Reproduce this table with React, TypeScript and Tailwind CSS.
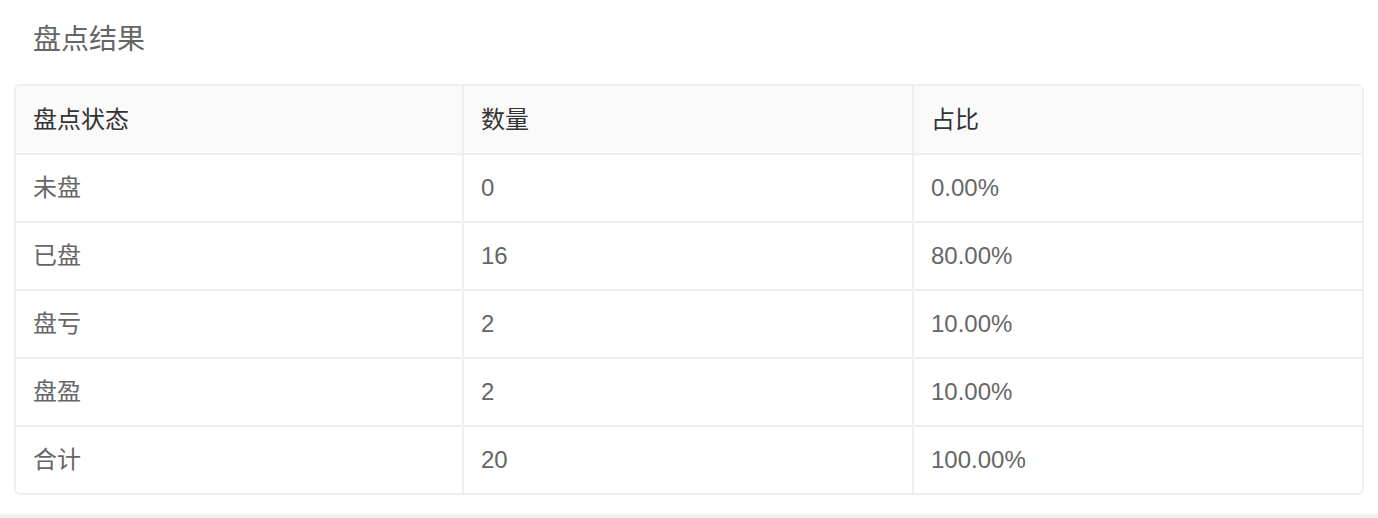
const rows = [
  { status: '未盘', count: '0', ratio: '0.00%' },
  { status: '已盘', count: '16', ratio: '80.00%' },
  { status: '盘亏', count: '2', ratio: '10.00%' },
  { status: '盘盈', count: '2', ratio: '10.00%' },
  { status: '合计', count: '20', ratio: '100.00%' },
];

const font = "font-['Liberation_Sans','Noto_Sans_CJK_SC',sans-serif]";

export default function App() {
  return (
    <div className={`min-h-[518px] bg-white ${font}`}>
      <div className="h-[84px] pl-[33px] pt-[25px] text-[28px] leading-[30px] text-[#666]">盘点结果</div>

      <div className="mx-[14px] overflow-hidden rounded-[6px] border-2 border-[#efefef]">
        <div className="grid h-[67px] grid-cols-[448px_450px_1fr] bg-[#fafafa] text-[24px] text-[#333]">
          {['盘点状态', '数量', '占比'].map((h, i) => (
            <div
              key={h}
              className={`flex items-center pl-[17px] ${i < 2 ? 'border-r-2 border-[#efefef]' : ''}`}
            >
              {h}
            </div>
          ))}
        </div>
        {rows.map((r) => (
          <div
            key={r.status}
            className="grid h-[68px] grid-cols-[448px_450px_1fr] border-t-2 border-[#efefef] text-[24px] text-[#666]"
          >
            <div className="flex items-center border-r-2 border-[#efefef] pl-[17px]">{r.status}</div>
            <div className="flex items-center border-r-2 border-[#efefef] pl-[17px]">{r.count}</div>
            <div className="flex items-center pl-[17px]">{r.ratio}</div>
          </div>
        ))}
      </div>

      <div className="mt-[19px] h-[6px] bg-[#f0f0f0]" />
    </div>
  );
}
